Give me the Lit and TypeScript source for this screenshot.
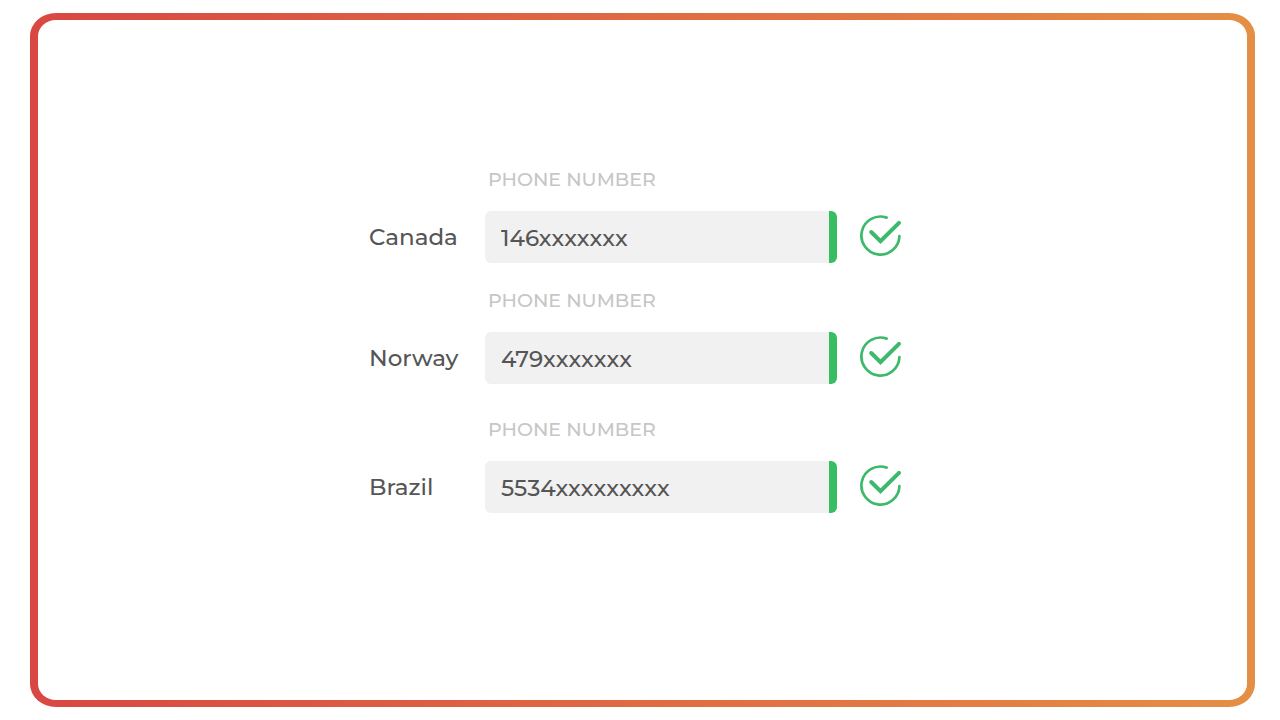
import { LitElement, html, css } from "lit";
import { customElement, property } from "lit/decorators.js";

@customElement("phone-row")
class PhoneRow extends LitElement {
  @property() country = "";
  @property() value = "";

  static styles = css`
    :host {
      display: grid;
      grid-template-columns: 116px minmax(0, 352px) 42px;
      grid-template-rows: 26px 52px;
      row-gap: 18px;
      align-items: center;
    }
    .caption {
      grid-column: 2;
      padding-left: 3px;
      font-size: 19px;
      line-height: 26px;
      color: #c6c6c6;
      white-space: nowrap;
    }
    .country {
      grid-column: 1;
      grid-row: 2;
      font-size: 23px;
      line-height: 28px;
      color: #555;
    }
    .field {
      grid-column: 2;
      grid-row: 2;
      box-sizing: border-box;
      width: 100%;
      height: 52px;
      margin: 0;
      padding: 2px 16px 0;
      border: 0;
      border-radius: 6px;
      outline: 0;
      background: linear-gradient(to left, #39bd62 8px, #f1f1f1 8px);
      font: inherit;
      font-size: 23px;
      color: #555;
    }
    .valid {
      grid-column: 3;
      grid-row: 2;
      width: 42px;
      height: 42px;
      margin: 0 0 2px 23px;
      fill: none;
      stroke: #3db96b;
    }
    .ring {
      stroke-width: 2.7;
      stroke-linecap: round;
    }
    .tick {
      stroke-width: 4;
      stroke-linecap: round;
    }
  `;

  render() {
    return html`
      <label class="caption" for="phone">PHONE NUMBER</label>
      <span class="country" id="country">${this.country}</span>
      <input class="field" id="phone" type="tel" aria-describedby="country" .value=${this.value} />
      <svg class="valid" viewBox="0 0 42 42" role="img" aria-label="Valid">
        <path class="ring" d="M39.4 21.2A19 19 0 1 1 26.6 2.6" />
        <path class="tick" d="M11.2 17L20.5 26.2L39 7.9" />
      </svg>
    `;
  }
}

@customElement("app-root")
class AppRoot extends LitElement {
  static styles = css`
    :host {
      display: flex;
      box-sizing: border-box;
      min-height: 100vh;
      padding: 13px 25px 13px 30px;
      background: #fff;
      font-family: Montserrat, Inter, sans-serif;
      font-weight: 500;
    }
    .frame {
      flex: 1;
      display: flex;
      flex-direction: column;
      align-items: center;
      justify-content: center;
      box-sizing: border-box;
      padding: 0 14px 40px 0;
      border: 7px solid transparent;
      border-width: 7px 8px;
      border-radius: 26px / 23px;
      background:
        linear-gradient(#fff, #fff) padding-box,
        linear-gradient(to right, #d94742, #e58e45) border-box;
    }
    .rows {
      display: flex;
      flex-direction: column;
      gap: 25px;
      padding-right: 23px;
    }
    .spaced {
      margin-top: 8px;
    }
  `;

  render() {
    return html`
      <main class="frame">
        <form class="rows">
          <phone-row country="Canada" value="146xxxxxxx"></phone-row>
          <phone-row country="Norway" value="479xxxxxxx"></phone-row>
          <phone-row class="spaced" country="Brazil" value="5534xxxxxxxxx"></phone-row>
        </form>
      </main>
    `;
  }
}
